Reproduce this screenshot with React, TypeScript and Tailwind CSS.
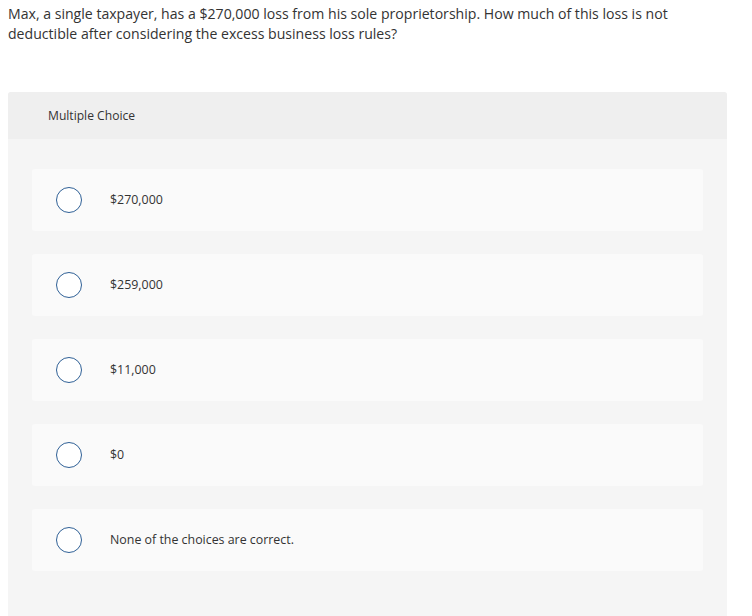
import React from "react";

const options = ["$270,000", "$259,000", "$11,000", "$0", "None of the choices are correct."];

export default function App() {
  return (
    <div className="min-h-[616px] bg-white text-[#333333]" style={{ fontFamily: "'Open Sans', Lato, sans-serif" }}>
      <div className="ml-2 w-[700px] pt-[4px] text-[14.1px] leading-[20px]">
        Max, a single taxpayer, has a $270,000 loss from his sole proprietorship. How much of this loss is not deductible after considering the excess business loss rules?
      </div>
      <div className="mx-2 mt-[48px] w-[719px] rounded-t-[3px] bg-[#f5f5f5] pb-[60px]">
        <div className="flex h-[47px] items-center rounded-t-[3px] bg-[#efefef] pl-[40px] pt-[1px] text-[12.1px]">
          Multiple Choice
        </div>
        <div className="flex flex-col gap-[23px] px-[24px] pt-[30px]">
          {options.map((o) => (
            <div key={o} className="flex h-[62px] items-center rounded-[3px] bg-[#fafafa] pl-[24px]">
              <span className="h-[26px] w-[26px] shrink-0 rounded-full border-[1.5px] border-[#2f6096] bg-white" />
              <span className="ml-[28px] text-[12.4px]">{o}</span>
            </div>
          ))}
        </div>
      </div>
    </div>
  );
}
